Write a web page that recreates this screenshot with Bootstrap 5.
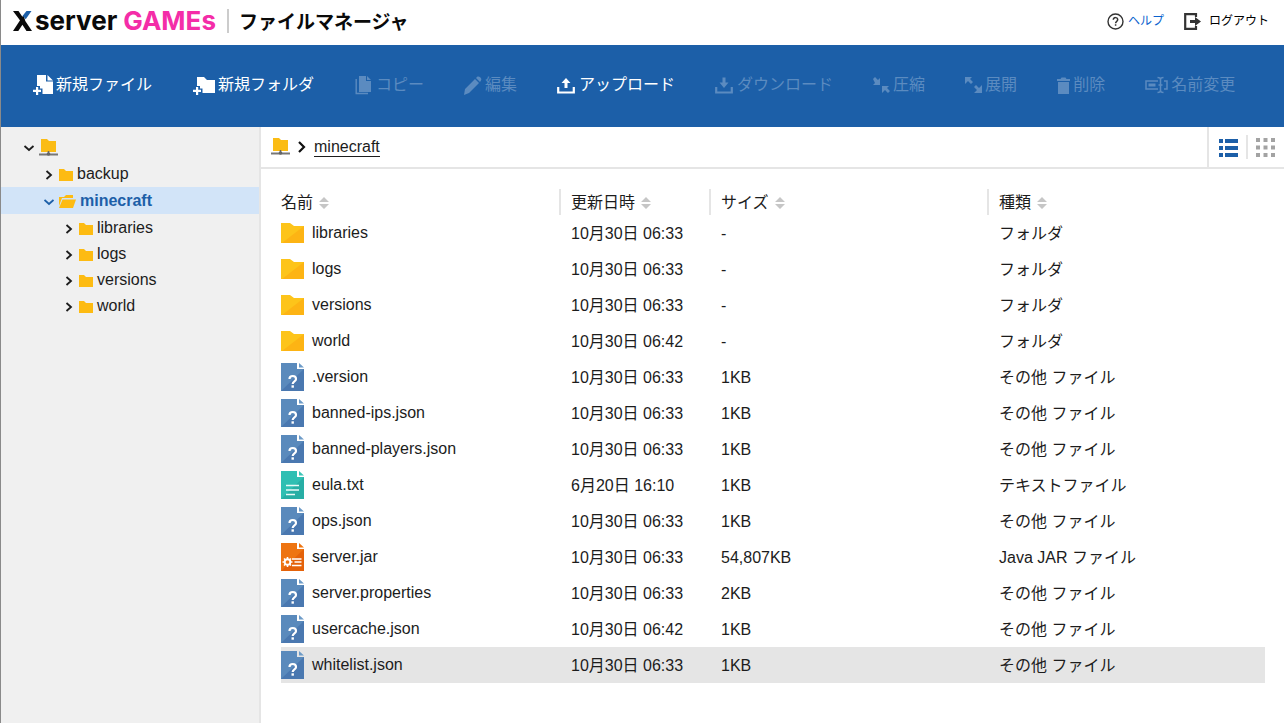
<!DOCTYPE html>
<html lang="ja">
<head>
<meta charset="utf-8">
<meta name="viewport" content="width=device-width, initial-scale=1">
<title>ファイルマネージャ</title>
<link href="https://cdn.jsdelivr.net/npm/bootstrap@5.3.0/dist/css/bootstrap.min.css" rel="stylesheet">
<style>
  body { font: 16px/24px "Liberation Sans", "Noto Sans CJK JP", sans-serif; color: #1c1c1c; background: #fff; border-left: 1px solid #8a8a8a; }
  svg { display: block; flex: none; }
  a, button { color: inherit; text-decoration: none; }
  button { background: none; border: 0; padding: 0; }
  .topbar { height: 45px; padding: 0 15px 3px 12px; }
  .brand { color: #0a0a0a; line-height: 32px; }
  .brand-x { width: 20px; height: 20px; margin-right: 2px; }
  .brand-name { font: 700 26px/32px Inter, sans-serif; }
  .brand-games { color: #f42da8; margin-left: 6px; }
  .brand-rule { width: 2px; height: 24px; background: #ccc; margin: 0 10px 0 11px; }
  .brand-title { font: 700 19px/32px "Noto Sans CJK JP", sans-serif; }
  .account { font-size: 12px; }
  .help { color: #0b63ce; }
  .toolbar { height: 82px; background: #1c5fa8; color: #fff; padding: 0 32px 2px; column-gap: 40px; }
  .toolbar button { gap: 2px; white-space: nowrap; }
  .toolbar button:disabled { color: #5b8bc0; }
  .side { width: 260px; background: #f0f0f0; border-right: 2px solid #e5e5e5; }
  .tree a { display: flex; align-items: center; height: 26px; }
  .tree svg { margin-top: 2px; }
  .tree .root { height: 34px; padding: 6px 0 0 22px; gap: 4px; }
  .tree .lv1 { padding-left: 43px; gap: 5px; }
  .tree .lv2 { padding-left: 63px; gap: 5px; }
  .tree .lv1 span, .tree .lv2 span { margin-left: -1px; }
  .tree .current { height: 27px; background: #d2e4f8; color: #1c5fa8; font-weight: 700; }
  .tree .leaves { padding-top: 1px; }
  .pathbar { height: 42px; border-bottom: 2px solid #e5e5e5; padding-left: 10px; }
  .pathbar a { color: #1c1c1c; }
  .crumb { line-height: 18px; padding-top: 1px; border-bottom: 1px solid #1c1c1c; }
  .views { border-left: 2px solid #e5e5e5; padding: 0 9px 0 10px; gap: 8px; }
  .views-rule { width: 2px; height: 24px; background: #e5e5e5; }
  .listing { padding: 20px 19px 40px 20px; }
  .files { width: 100%; table-layout: fixed; border-collapse: separate; border-spacing: 0; }
  .files th { height: 26px; padding: 0; font-weight: 400; }
  .files th + th { border-left: 2px solid #e5e5e5; padding-left: 10px; }
  .files td { height: 36px; padding: 2px 0 0 12px; white-space: nowrap; }
  .files td:first-child { padding: 0; }
  .files td a { display: flex; align-items: center; gap: 8px; }
  .files .picked { background: #e5e5e5; }
  .files th button { display: flex; align-items: center; gap: 6px; height: 26px; padding-top: 1px; }
  .w-name, .w-size { width: 278px; }
  .w-date { width: 150px; }
</style>
<script src="https://cdn.jsdelivr.net/npm/bootstrap@5.3.0/dist/js/bootstrap.bundle.min.js"></script>
</head>
<body class="min-vh-100 d-flex flex-column">

<svg class="d-none" aria-hidden="true">
  <symbol id="i-right" viewBox="0 0 10 12"><path d="M2.500 2 7 6 2.500 10" fill="none" stroke="currentColor" stroke-width="1.800"/></symbol>
  <symbol id="i-down" viewBox="0 0 12 12"><path d="M1.500 4 6 8 10.500 4" fill="none" stroke="currentColor" stroke-width="1.800"/></symbol>
  <symbol id="i-root" viewBox="0 0 19 18"><path d="M2 0h6l2 2h7v11H2z" fill="#fbbc14"/><path d="M9.500 12v3" stroke="#666" stroke-width="1.500"/><path d="M0 15.500h19" stroke="#777" stroke-width="2"/><circle cx="9.500" cy="15" r="1.800" fill="#666"/></symbol>
  <symbol id="i-dir" viewBox="0 0 14 12"><path d="M0 0h5l2 2h7v10H0z" fill="#fdbb12"/></symbol>
  <symbol id="i-open" viewBox="0 0 17 13"><path d="M0 2h5l2-2h7v3H3L0 11z" fill="#fdbb12"/><path d="M3.500 4.500H17L14 13H0z" fill="#fdbb12"/></symbol>
  <symbol id="i-folder" viewBox="0 0 23 20"><path d="M0 0h9l4 3h10v17H0z" fill="#fdc41a"/><path d="M23 3v17H1z" fill="#fdb414"/></symbol>
  <symbol id="i-other" viewBox="0 0 23 28"><path d="M0 0h16v6h7v22H0z" fill="#5a8abc"/><path d="M23 6v22H0z" fill="#4a78b0"/><path d="M18 0 23 4.500h-5z" fill="#6d9bc8"/><path d="M8.500 16c0-4 6.500-4 6.500 0 0 2.500-3.300 2.200-3.300 5" fill="none" stroke="#fff" stroke-width="2.200"/><path d="M10.500 22.300h2.400v2.400h-2.400z" fill="#fff"/></symbol>
  <symbol id="i-text" viewBox="0 0 23 28"><path d="M0 0h16v6h7v22H0z" fill="#2fbfb3"/><path d="M23 6v22H0z" fill="#27aea5"/><path d="M18 0 23 4.500h-5z" fill="#3cc5b8"/><path d="M5 14.500h13M5 19h13M5 23.500h9" stroke="#e8faf7" stroke-width="1.500"/></symbol>
  <symbol id="i-jar" viewBox="0 0 23 28"><path d="M0 0h16v6h7v22H0z" fill="#ee7411"/><path d="M23 6v22H0z" fill="#e4620a"/><path d="M18 0 23 4.500h-5z" fill="#ee7411"/><circle cx="6.500" cy="19" r="2.800" fill="none" stroke="#fff" stroke-width="1.900"/><path d="M6.500 14v2M6.500 22v2M1.500 19h2M9.500 19h2M3 15.500l1.500 1.500M8.500 21l1.500 1.500M3 22.500 4.500 21M8.500 17l1.500-1.500M11 16h9.500M13.500 19h7M11 22.500h9.500" stroke="#fff" stroke-width="1.600"/></symbol>
  <symbol id="i-sort" viewBox="0 0 10 12"><path d="M5 0 10 5H0zM0 7h10l-5 5z" fill="#c6c6c6"/></symbol>
</svg>

<header class="topbar d-flex align-items-center justify-content-between">
  <a href="#" class="brand d-flex align-items-center">
    <svg class="brand-x" viewBox="0 0 20 20" role="img" aria-label="X"><path d="M0 0h5.500l4.200 6.300L7.500 10zM12.300 10 19 20h-5.500L9.400 13.700 5.300 20H0L10.500 4z" fill="#0a0a0a"/><path d="M13.500 0h5l-5.800 8.300-3-3.500z" fill="#1c5fa8"/></svg>
    <span class="brand-name">server<span class="brand-games">GAMEs</span></span>
    <span class="brand-rule"></span>
    <span class="brand-title">ファイルマネージャ</span>
  </a>
  <nav class="account d-flex align-items-center">
    <a href="#" class="help d-flex align-items-center">
      <svg class="me-1" width="17" height="17" viewBox="0 0 17 17" fill="none" stroke="#333"><circle cx="8.500" cy="8.500" r="7.500" stroke-width="1.400"/><path d="M6.300 6.800c0-3 4.400-2.800 4.400 0 0 1.600-2.100 1.600-2.100 3.400M8.600 11.200v1.600" stroke-width="1.500"/></svg>ヘルプ</a>
    <a href="#" class="d-flex align-items-center ms-3 text-black">
      <svg class="ms-1 me-2" width="17" height="17" viewBox="0 0 17 17"><path d="M12 4V1.200H1.200v14.600H12V13" fill="none" stroke="#333" stroke-width="2.200"/><path d="M6 7h5V4l6 4.500-6 4.500v-3H6z" fill="#333"/></svg>ログアウト</a>
  </nav>
</header>

<div class="toolbar d-flex flex-wrap align-items-center" role="toolbar">
  <button type="button" class="d-flex align-items-center"><svg width="21" height="21" viewBox="0 0 21 21" fill="currentColor"><path d="M4 0h9v6.500h7V19H9.500v-5.500H7V11H4z"/><path d="M14.500 0 20 5.500h-5.500zM3 12h2.200v2.800H8V17H5.200v3H3v-3H0v-2.200h3z"/></svg>新規ファイル</button>
  <button type="button" class="d-flex align-items-center"><svg width="24" height="21" viewBox="-1 0 24 21" fill="currentColor"><path d="M4 2h7l3 3h8v13H9.500v-4.500H7V11H4z"/><path d="M3 12h2.200v2.800H8V17H5.200v3H3v-3H0v-2.200h3z"/></svg>新規フォルダ</button>
  <button type="button" disabled class="d-flex align-items-center"><svg width="20" height="20" viewBox="-1 0 20 20" fill="currentColor"><path d="M4 1h7v5h5v11H4z"/><path d="M12 1l4 4h-4z"/><path d="M1.200 4v14.500H13" fill="none" stroke="currentColor" stroke-width="1.400"/></svg>コピー</button>
  <button type="button" disabled class="d-flex align-items-center"><svg width="19" height="20" viewBox="0 0 19 20" fill="currentColor"><path d="M0 20l1-6L11 4l4 4L5 18zM12 3l1.500-1.500Q15 1 16.500 2.500T17 5.500L16 7z"/></svg>編集</button>
  <button type="button" class="d-flex align-items-center"><svg width="20" height="20" viewBox="0 0 20 20" fill="currentColor"><path d="M9 3l4.500 5h-3v5h-3V8h-3z"/><path d="M1.200 12v5.500h15.600V12" fill="none" stroke="currentColor" stroke-width="2.200"/></svg>アップロード</button>
  <button type="button" disabled class="d-flex align-items-center"><svg width="20" height="20" viewBox="0 0 20 20" fill="currentColor"><path d="M7.500 2.500h3v5h3L9 13 4.500 7.500h3z"/><path d="M1.200 12v5.500h15.600V12" fill="none" stroke="currentColor" stroke-width="2.200"/></svg>ダウンロード</button>
  <button type="button" disabled class="d-flex align-items-center"><svg width="18" height="20" viewBox="0 0 18 20" fill="currentColor"><path d="M0 4l2-2 3 3 2-2v7H0l2-2zM9 11h7l-2 2 3 3-2 2-3-3-3 3z"/></svg>圧縮</button>
  <button type="button" disabled class="d-flex align-items-center"><svg width="18" height="20" viewBox="0 0 18 20" fill="currentColor"><path d="M0 2h7L5 4l3 3-2 2-3-3-3 3zM9 12l2-2 3 3 3-3v8H9l3-3z"/></svg>展開</button>
  <button type="button" disabled class="d-flex align-items-center"><svg width="14" height="20" viewBox="0 0 14 20" fill="currentColor"><path d="M0 4h3.500l1-1.500h4l1 1.500H13v2H0zM1 7h11v12H1z"/></svg>削除</button>
  <button type="button" disabled class="d-flex align-items-center"><svg width="24" height="20" viewBox="0 0 24 20" fill="none" stroke="currentColor" stroke-width="1.500"><path d="M13 6H1v8h12M19 6h3v8h-3M12.500 2.500q3 0 3 2v11q0 2-3 2M18.500 2.500q-3 0-3 2v11q0 2 3 2M13.500 10h4"/><path d="M3.500 10h7" stroke-width="3"/></svg>名前変更</button>
</div>

<div class="d-flex flex-grow-1">
  <nav class="side flex-shrink-0">
    <ul class="tree list-unstyled mb-0">
      <li><a href="#" class="root" aria-label="ルート"><svg width="12" height="12"><use href="#i-down"/></svg><svg width="19" height="18"><use href="#i-root"/></svg></a>
        <ul class="list-unstyled">
          <li><a href="#" class="lv1"><svg width="10" height="12"><use href="#i-right"/></svg><svg width="14" height="12"><use href="#i-dir"/></svg><span>backup</span></a></li>
          <li><a href="#" class="lv1 current"><svg width="10" height="12" viewBox="1 0 10 12"><use href="#i-down" width="12" height="12"/></svg><svg width="17" height="13"><use href="#i-open"/></svg><span>minecraft</span></a>
            <ul class="leaves list-unstyled">
              <li><a href="#" class="lv2"><svg width="10" height="12"><use href="#i-right"/></svg><svg width="14" height="12"><use href="#i-dir"/></svg><span>libraries</span></a></li>
              <li><a href="#" class="lv2"><svg width="10" height="12"><use href="#i-right"/></svg><svg width="14" height="12"><use href="#i-dir"/></svg><span>logs</span></a></li>
              <li><a href="#" class="lv2"><svg width="10" height="12"><use href="#i-right"/></svg><svg width="14" height="12"><use href="#i-dir"/></svg><span>versions</span></a></li>
              <li><a href="#" class="lv2"><svg width="10" height="12"><use href="#i-right"/></svg><svg width="14" height="12"><use href="#i-dir"/></svg><span>world</span></a></li>
            </ul>
          </li>
        </ul>
      </li>
    </ul>
  </nav>

  <main class="flex-grow-1">
    <div class="pathbar d-flex align-items-stretch justify-content-between">
      <div class="d-flex align-items-center">
        <a href="#" aria-label="ルート"><svg width="19" height="18"><use href="#i-root"/></svg></a>
        <svg class="mx-2" width="8" height="12" viewBox="0 0 8 12"><path d="M1 1l5 5-5 5" fill="none" stroke="#111" stroke-width="2.200"/></svg>
        <a href="#" class="crumb">minecraft</a>
      </div>
      <div class="views d-flex align-items-center">
        <button type="button" aria-label="リスト表示"><svg width="19" height="19" viewBox="0 0 19 19" fill="#1c5fa8"><path d="M0 1h4v4H0zM6 1h13v4H6zM0 8h4v4H0zM6 8h13v4H6zM0 15h4v4H0zM6 15h13v4H6z"/></svg></button>
        <span class="views-rule"></span>
        <button type="button" aria-label="アイコン表示"><svg width="19" height="19" viewBox="0 0 19 19" fill="#a3a3a3"><path d="M0 0h4v4H0zM7.500 0h4v4h-4zM15 0h4v4h-4zM0 7.500h4v4H0zM7.500 7.500h4v4h-4zM15 7.500h4v4h-4zM0 15h4v4H0zM7.500 15h4v4h-4zM15 15h4v4h-4z"/></svg></button>
      </div>
    </div>

    <div class="listing">
      <table class="files">
        <colgroup><col class="w-name"><col class="w-date"><col class="w-size"><col></colgroup>
        <thead><tr>
          <th><button type="button">名前<svg width="10" height="12"><use href="#i-sort"/></svg></button></th>
          <th><button type="button">更新日時<svg width="10" height="12"><use href="#i-sort"/></svg></button></th>
          <th><button type="button">サイズ<svg width="10" height="12"><use href="#i-sort"/></svg></button></th>
          <th><button type="button">種類<svg width="10" height="12"><use href="#i-sort"/></svg></button></th>
        </tr></thead>
        <tbody>
          <tr><td><a href="#"><svg width="23" height="20"><use href="#i-folder"/></svg>libraries</a></td><td>10月30日 06:33</td><td>-</td><td>フォルダ</td></tr>
          <tr><td><a href="#"><svg width="23" height="20"><use href="#i-folder"/></svg>logs</a></td><td>10月30日 06:33</td><td>-</td><td>フォルダ</td></tr>
          <tr><td><a href="#"><svg width="23" height="20"><use href="#i-folder"/></svg>versions</a></td><td>10月30日 06:33</td><td>-</td><td>フォルダ</td></tr>
          <tr><td><a href="#"><svg width="23" height="20"><use href="#i-folder"/></svg>world</a></td><td>10月30日 06:42</td><td>-</td><td>フォルダ</td></tr>
          <tr><td><a href="#"><svg width="23" height="28"><use href="#i-other"/></svg>.version</a></td><td>10月30日 06:33</td><td>1KB</td><td>その他 ファイル</td></tr>
          <tr><td><a href="#"><svg width="23" height="28"><use href="#i-other"/></svg>banned-ips.json</a></td><td>10月30日 06:33</td><td>1KB</td><td>その他 ファイル</td></tr>
          <tr><td><a href="#"><svg width="23" height="28"><use href="#i-other"/></svg>banned-players.json</a></td><td>10月30日 06:33</td><td>1KB</td><td>その他 ファイル</td></tr>
          <tr><td><a href="#"><svg width="23" height="28"><use href="#i-text"/></svg>eula.txt</a></td><td>6月20日 16:10</td><td>1KB</td><td>テキストファイル</td></tr>
          <tr><td><a href="#"><svg width="23" height="28"><use href="#i-other"/></svg>ops.json</a></td><td>10月30日 06:33</td><td>1KB</td><td>その他 ファイル</td></tr>
          <tr><td><a href="#"><svg width="23" height="28"><use href="#i-jar"/></svg>server.jar</a></td><td>10月30日 06:33</td><td>54,807KB</td><td>Java JAR ファイル</td></tr>
          <tr><td><a href="#"><svg width="23" height="28"><use href="#i-other"/></svg>server.properties</a></td><td>10月30日 06:33</td><td>2KB</td><td>その他 ファイル</td></tr>
          <tr><td><a href="#"><svg width="23" height="28"><use href="#i-other"/></svg>usercache.json</a></td><td>10月30日 06:42</td><td>1KB</td><td>その他 ファイル</td></tr>
          <tr class="picked"><td><a href="#"><svg width="23" height="28"><use href="#i-other"/></svg>whitelist.json</a></td><td>10月30日 06:33</td><td>1KB</td><td>その他 ファイル</td></tr>
        </tbody>
      </table>
    </div>
  </main>
</div>
</body>
</html>
